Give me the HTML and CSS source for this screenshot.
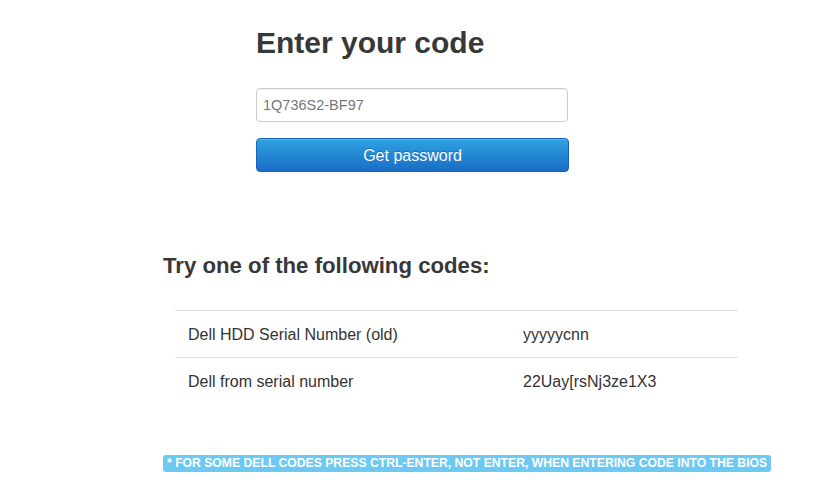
FILE: index.html
```html
<!DOCTYPE html>
<html>
<head>
<meta charset="utf-8">
<link rel="stylesheet" href="styles.css">
</head>
<body>
<div class="page">
  <div class="form-block">
    <h1 class="title">Enter your code</h1>
    <div class="code-input">1Q736S2-BF97</div>
    <button class="btn-primary">Get password</button>
  </div>
  <h3 class="subtitle">Try one of the following codes:</h3>
  <table class="codes">
    <tr><td class="c-name">Dell HDD Serial Number (old)</td><td class="c-val">yyyyycnn</td></tr>
    <tr><td class="c-name">Dell from serial number</td><td class="c-val">22Uay[rsNj3ze1X3</td></tr>
  </table>
  <div class="note"><span class="label">* FOR SOME DELL CODES PRESS CTRL-ENTER, NOT ENTER, WHEN ENTERING CODE INTO THE BIOS</span></div>
</div>
</body>
</html>
```
FILE: styles.css
```css
html, body {
  margin: 0;
  padding: 0;
  background: #fff;
}
body {
  font-family: "Liberation Sans", Arial, Helvetica, sans-serif;
  color: #333;
}
.page {
  width: 607px;
  margin-left: 163px;
  padding-top: 25px;
}
.form-block {
  margin-left: 93px;
  width: 313px;
  display: flex;
  flex-direction: column;
}
.title {
  margin: 0;
  font-size: 30px;
  line-height: 36px;
  font-weight: bold;
  color: #383838;
}
.code-input {
  margin-top: 27px;
  box-sizing: border-box;
  width: 312px;
  height: 34px;
  border: 1px solid #ccc;
  border-radius: 4px;
  box-shadow: inset 0 1px 1px rgba(0,0,0,0.075);
  padding: 0 6px;
  font-size: 14.5px;
  line-height: 32px;
  color: #777;
}
.btn-primary {
  margin-top: 16px;
  box-sizing: border-box;
  width: 313px;
  height: 34px;
  border: 1px solid #1c63b8;
  border-radius: 4px;
  background: linear-gradient(to bottom, #2ea3e2, #1a6cc6);
  color: #fff;
  font-family: "Liberation Sans", Arial, Helvetica, sans-serif;
  font-size: 16px;
  line-height: 20px;
  padding: 1px 0 0 0;
  text-shadow: 0 -1px 0 rgba(0,0,0,0.2);
  box-shadow: inset 0 1px 0 rgba(255,255,255,0.2);
}
.subtitle {
  margin: 80px 0 0 0;
  font-size: 22.2px;
  line-height: 28px;
  font-weight: bold;
  color: #383838;
}
.codes {
  margin: 30px 0 0 12px;
  width: 563px;
  border-collapse: collapse;
  font-size: 16px;
  color: #333;
}
.codes td {
  border-top: 1px solid #ddd;
  padding: 13px 13px 11px 13px;
  line-height: 22px;
  text-align: left;
}
.c-name {
  width: 309px;
}
.note {
  margin-top: 51px;
  display: flex;
}
.label {
  display: block;
  background: #6bc9f3;
  color: #fff;
  font-size: 12.2px;
  font-weight: bold;
  line-height: 17px;
  padding: 0 4px;
  border-radius: 3px;
  white-space: nowrap;
}
```
